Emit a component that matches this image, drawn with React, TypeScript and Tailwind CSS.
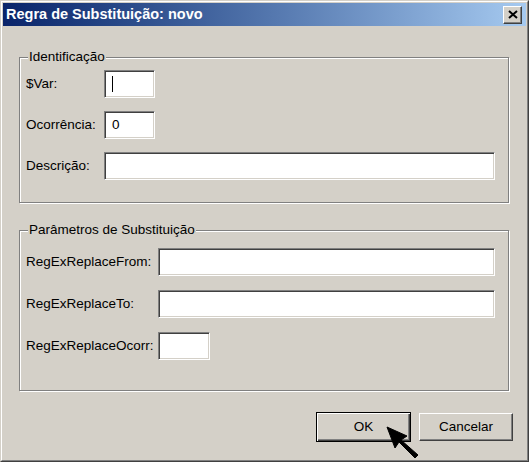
import React from 'react';

const sunken =
    'bg-white border border-t-[#808080] border-l-[#808080] border-b-white border-r-white shadow-[inset_1px_1px_0_#404040,inset_-1px_-1px_0_#d4d0c8]';

function Field({ label, labelWidth, inputWidth, children }: { label: string; labelWidth: string; inputWidth: string; children?: React.ReactNode }) {
    return (
        <div className="flex items-center">
            <span className={`${labelWidth} shrink-0`}>{label}</span>
            <div className={`${inputWidth} h-[28px] ${sunken} flex items-center pl-[7px]`}>{children}</div>
        </div>
    );
}

function GroupBox({ title, children, className = '' }: { title: string; children: React.ReactNode; className?: string }) {
    return (
        <fieldset className={`w-[490px] border border-[#808080] shadow-[inset_1px_1px_0_#fff,1px_1px_0_#fff] ${className}`}>
            <legend className="ml-[8px] px-[1px] leading-[14px] bg-[#d4d0c8]">{title}</legend>
            {children}
        </fieldset>
    );
}

export default function App() {
    return (
        <div
            className="relative w-[529px] h-[462px] bg-[#d4d0c8] text-black text-[13.5px] select-none"
            style={{ fontFamily: '"Liberation Sans", Arial, sans-serif' }}
        >
            <div className="w-full h-full flex flex-col border border-t-[#d4d0c8] border-l-[#d4d0c8] border-r-[#404040] border-b-[#404040]">
                <div className="flex-1 flex flex-col border border-t-white border-l-white border-r-[#808080] border-b-[#808080] p-[1px]">
                    {/* Title bar */}
                    <div className="h-[23px] flex items-center justify-between pl-[3px] pr-[4px] bg-gradient-to-r from-[#0a246a] to-[#a6caf0]">
                        <span className="text-white font-bold text-[14.5px]">Regra de Substituição: novo</span>
                        <button className="w-[19px] h-[18px] flex items-center justify-center bg-[#d4d0c8] border border-t-white border-l-white border-r-[#404040] border-b-[#404040] shadow-[inset_-1px_-1px_0_#808080]">
                            <svg width="10" height="9" viewBox="0 0 10 9">
                                <path d="M1 1 L9 8 M9 1 L1 8" stroke="#000" strokeWidth="2" />
                            </svg>
                        </button>
                    </div>

                    {/* Body */}
                    <div className="flex-1 flex flex-col pl-[16px] pt-[24px]">
                        <GroupBox title="Identificação">
                            <div className="flex flex-col gap-[13px] pt-[6px] pb-[22px] pl-[6px]">
                                <Field label="$Var:" labelWidth="w-[78px]" inputWidth="w-[51px]">
                                    <span className="block w-px h-[16px] bg-black" />
                                </Field>
                                <Field label="Ocorrência:" labelWidth="w-[78px]" inputWidth="w-[51px]">
                                    <span>0</span>
                                </Field>
                                <Field label="Descrição:" labelWidth="w-[78px]" inputWidth="w-[391px]" />
                            </div>
                        </GroupBox>

                        <GroupBox title="Parâmetros de Substituição" className="mt-[20px]">
                            <div className="flex flex-col gap-[14px] pt-[11px] pb-[30px] pl-[6px]">
                                <Field label="RegExReplaceFrom:" labelWidth="w-[132px]" inputWidth="w-[337px]" />
                                <Field label="RegExReplaceTo:" labelWidth="w-[132px]" inputWidth="w-[337px]" />
                                <Field label="RegExReplaceOcorr:" labelWidth="w-[132px]" inputWidth="w-[52px]" />
                            </div>
                        </GroupBox>

                        {/* Buttons */}
                        <div className="flex justify-end items-center gap-[8px] pr-[13px] mt-[21px]">
                            <button className="w-[95px] h-[30px] border border-black shadow-[inset_1px_1px_0_#fff,inset_-1px_-1px_0_#404040,inset_-2px_-2px_0_#808080]">
                                OK
                            </button>
                            <button className="w-[94px] h-[28px] border border-t-white border-l-white border-r-[#404040] border-b-[#404040] shadow-[inset_-1px_-1px_0_#808080]">
                                Cancelar
                            </button>
                        </div>
                    </div>
                </div>
            </div>

            {/* Mouse cursor */}
            <svg className="absolute left-[386px] top-[426px]" width="34" height="34" viewBox="0 0 34 34">
                <path d="M1 1 L21 10 L15 14 L32 29 L29 32 L13 16 L9 22 Z" fill="#000" stroke="#000" strokeWidth="1" strokeLinejoin="round" />
            </svg>
        </div>
    );
}
